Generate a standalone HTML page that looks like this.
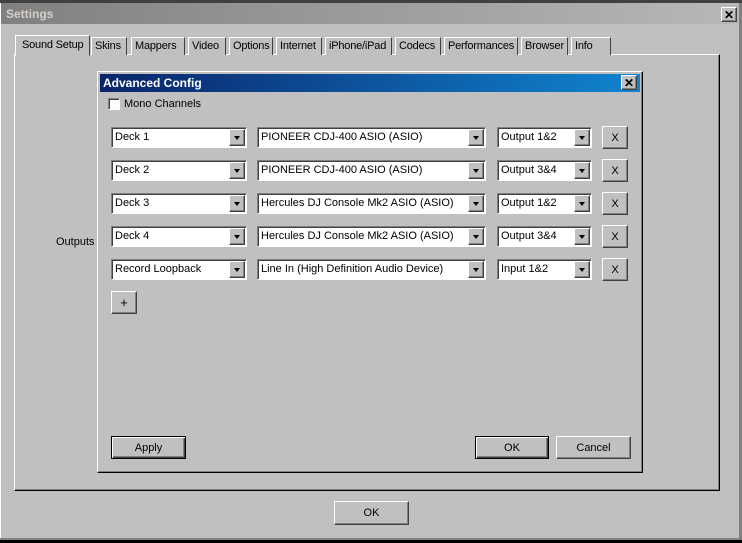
<!DOCTYPE html>
<html><head><meta charset="utf-8"><style>
*{box-sizing:border-box;margin:0;padding:0}
body{width:742px;height:543px;background:#c0c0c0;position:relative;overflow:hidden;font-family:"Liberation Sans",sans-serif;font-size:11px;color:#000}
.a{position:absolute}
.raised{background:#c0c0c0;border:1px solid;border-color:#fff #404040 #404040 #fff;box-shadow:inset -1px -1px 0 #808080}
.btn{display:flex;align-items:center;justify-content:center}
.def{border:1px solid #000;box-shadow:inset 1px 1px 0 #fff,inset -1px -1px 0 #404040,inset -2px -2px 0 #808080}
.combo{background:#fff;border:1px solid;border-color:#808080 #fff #fff #808080;box-shadow:inset 1px 1px 0 #404040;padding:0 0 0 3px;line-height:19px;white-space:nowrap}
.combo .arr{position:absolute;right:1px;top:1px;width:16px;height:17px;background:#c0c0c0;border:1px solid;border-color:#fff #404040 #404040 #fff;box-shadow:inset -1px -1px 0 #808080}
.combo .arr:after{content:"";position:absolute;left:4px;top:6px;border-left:3px solid transparent;border-right:3px solid transparent;border-top:4px solid #000}
.tab{position:absolute;top:37px;height:18px;border:1px solid;border-bottom:none;border-color:#fff #404040 #404040 #fff;padding:2px 0 0 3px;background:#c0c0c0;letter-spacing:-0.2px}
.x{font-weight:bold;font-size:12px;line-height:12px}
</style></head><body>
<div class="a" style="left:0;top:0;width:742px;height:3px;background:#404040"></div>
<div class="a" style="left:0;top:3px;width:742px;height:21px;background:linear-gradient(90deg,#808080,#b8b8b8);color:#d4d0c8;font-weight:bold;font-size:12px;padding:4px 0 0 6px">Settings</div>
<div class="a raised btn x" style="left:721px;top:7px;width:16px;height:15px">✕</div>
<div class="a" style="left:0;top:3px;width:1px;height:540px;background:#fff"></div>
<div class="a" style="left:739px;top:3px;width:3px;height:540px;background:#808080"></div>
<div class="a" style="left:0;top:538px;width:742px;height:5px;background:#000;border-top:2px solid #808080"></div>

<div class="a" style="left:14px;top:54px;width:706px;height:437px;border:1px solid;border-color:#fff #000 #000 #fff;box-shadow:inset -1px -1px 0 #808080"></div>
<div class="tab" style="left:15px;top:35px;height:21px;width:75px;padding:3px 0 0 6px;border-bottom:1px solid #c0c0c0">Sound Setup</div>
<div class="tab" style="left:91px;width:36px">Skins</div>
<div class="tab" style="left:131px;width:54px">Mappers</div>
<div class="tab" style="left:188px;width:38px">Video</div>
<div class="tab" style="left:229px;width:44px">Options</div>
<div class="tab" style="left:276px;width:46px">Internet</div>
<div class="tab" style="left:325px;width:67px">iPhone/iPad</div>
<div class="tab" style="left:395px;width:46px">Codecs</div>
<div class="tab" style="left:444px;width:74px">Performances</div>
<div class="tab" style="left:521px;width:47px">Browser</div>
<div class="tab" style="left:571px;width:40px">Info</div>

<div class="a" style="left:56px;top:236px">Outputs</div>

<div class="a" style="left:97px;top:71px;width:546px;height:402px;border:1px solid;border-color:#fff #000 #000 #fff;box-shadow:inset -1px -1px 0 #808080"></div>
<div class="a" style="left:100px;top:74px;width:540px;height:18px;background:linear-gradient(90deg,#0a246a,#1084d0);color:#fff;font-weight:bold;font-size:12px;padding:2px 0 0 3px">Advanced Config</div>
<div class="a raised btn x" style="left:621px;top:75px;width:16px;height:15px">✕</div>
<div class="a" style="left:108px;top:98px;width:12px;height:12px;background:#fff;border:1px solid;border-color:#808080 #fff #fff #808080;box-shadow:inset 1px 1px 0 #404040"></div>
<div class="a" style="left:124px;top:98px">Mono Channels</div>

<div class="a combo" style="left:111px;top:127px;width:136px;height:21px">Deck 1<div class="arr"></div></div>
<div class="a combo" style="left:257px;top:127px;width:229px;height:21px">PIONEER CDJ-400 ASIO (ASIO)<div class="arr"></div></div>
<div class="a combo" style="left:497px;top:127px;width:95px;height:21px">Output 1&amp;2<div class="arr"></div></div>
<div class="a raised btn" style="left:602px;top:126px;width:26px;height:23px">X</div>

<div class="a combo" style="left:111px;top:160px;width:136px;height:21px">Deck 2<div class="arr"></div></div>
<div class="a combo" style="left:257px;top:160px;width:229px;height:21px">PIONEER CDJ-400 ASIO (ASIO)<div class="arr"></div></div>
<div class="a combo" style="left:497px;top:160px;width:95px;height:21px">Output 3&amp;4<div class="arr"></div></div>
<div class="a raised btn" style="left:602px;top:159px;width:26px;height:23px">X</div>

<div class="a combo" style="left:111px;top:193px;width:136px;height:21px">Deck 3<div class="arr"></div></div>
<div class="a combo" style="left:257px;top:193px;width:229px;height:21px">Hercules DJ Console Mk2 ASIO (ASIO)<div class="arr"></div></div>
<div class="a combo" style="left:497px;top:193px;width:95px;height:21px">Output 1&amp;2<div class="arr"></div></div>
<div class="a raised btn" style="left:602px;top:192px;width:26px;height:23px">X</div>

<div class="a combo" style="left:111px;top:226px;width:136px;height:21px">Deck 4<div class="arr"></div></div>
<div class="a combo" style="left:257px;top:226px;width:229px;height:21px">Hercules DJ Console Mk2 ASIO (ASIO)<div class="arr"></div></div>
<div class="a combo" style="left:497px;top:226px;width:95px;height:21px">Output 3&amp;4<div class="arr"></div></div>
<div class="a raised btn" style="left:602px;top:225px;width:26px;height:23px">X</div>

<div class="a combo" style="left:111px;top:259px;width:136px;height:21px">Record Loopback<div class="arr"></div></div>
<div class="a combo" style="left:257px;top:259px;width:229px;height:21px">Line In (High Definition Audio Device)<div class="arr"></div></div>
<div class="a combo" style="left:497px;top:259px;width:95px;height:21px">Input 1&amp;2<div class="arr"></div></div>
<div class="a raised btn" style="left:602px;top:258px;width:26px;height:23px">X</div>

<div class="a raised btn" style="left:111px;top:291px;width:26px;height:23px;font-size:13px">+</div>

<div class="a btn def" style="left:111px;top:436px;width:75px;height:23px">Apply</div>
<div class="a btn def" style="left:475px;top:436px;width:74px;height:23px">OK</div>
<div class="a raised btn" style="left:556px;top:436px;width:75px;height:23px">Cancel</div>

<div class="a raised btn" style="left:334px;top:501px;width:75px;height:24px">OK</div>
</body></html>
